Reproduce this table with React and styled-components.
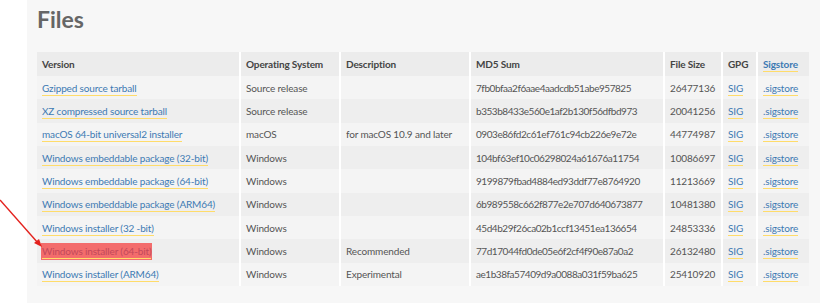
import React from "react";
import styled, { createGlobalStyle } from "styled-components";

const GlobalStyle = createGlobalStyle`
  html, body {
    margin: 0;
    padding: 0;
    background: #ffffff;
  }
  body {
    font-family: Lato, "Open Sans", sans-serif;
  }
`;

const files = [
  ["Gzipped source tarball", "Source release", "", "7fb0bfaa2f6aae4aadcdb51abe957825", "26477136"],
  ["XZ compressed source tarball", "Source release", "", "b353b8433e560e1af2b130f56dfbd973", "20041256"],
  ["macOS 64-bit universal2 installer", "macOS", "for macOS 10.9 and later", "0903e86fd2c61ef761c94cb226e9e72e", "44774987"],
  ["Windows embeddable package (32-bit)", "Windows", "", "104bf63ef10c06298024a61676a11754", "10086697"],
  ["Windows embeddable package (64-bit)", "Windows", "", "9199879fbad4884ed93ddf77e8764920", "11213669"],
  ["Windows embeddable package (ARM64)", "Windows", "", "6b989558c662f877e2e707d640673877", "10481380"],
  ["Windows installer (32 -bit)", "Windows", "", "45d4b29f26ca02b1ccf13451ea136654", "24853336"],
  ["Windows installer (64-bit)", "Windows", "Recommended", "77d17044fd0de05e6f2cf4f90e87a0a2", "26132480", true],
  ["Windows installer (ARM64)", "Windows", "Experimental", "ae1b38fa57409d9a0088a031f59ba625", "25410920"],
];

const widths = [203, 100, 130, 194, 58, 35, 52];

const App = () => {
  return (
    <Page>
      <GlobalStyle />
      <Panel>
        <Title>Files</Title>
        <Table>
          <colgroup>
            {widths.map((w, i) => (
              <col key={i} style={{ width: w }} />
            ))}
          </colgroup>
          <thead>
            <HeadRow>
              <Th>Version</Th>
              <Th>Operating System</Th>
              <Th>Description</Th>
              <Th>MD5 Sum</Th>
              <Th>File Size</Th>
              <Th>GPG</Th>
              <Th>
                <Link $bold>Sigstore</Link>
              </Th>
            </HeadRow>
          </thead>
          <tbody>
            {files.map(([name, os, desc, md5, size, marked]) => (
              <Row key={name}>
                <Td>
                  <Link $marked={marked}>{name}</Link>
                </Td>
                <Td>{os}</Td>
                <Td>{desc}</Td>
                <Td $hash>{md5}</Td>
                <Td>{size}</Td>
                <Td>
                  <Link>SIG</Link>
                </Td>
                <Td>
                  <Link>.sigstore</Link>
                </Td>
              </Row>
            ))}
          </tbody>
        </Table>
      </Panel>
      <Arrow width="46" height="52" viewBox="0 0 46 52">
        <line x1="0" y1="1" x2="38" y2="44" stroke="#e3211d" strokeWidth="1.4" />
        <polygon points="42,48 34,44 39,40" fill="#e3211d" />
      </Arrow>
    </Page>
  );
};

export default App;

const Page = styled.div`
  position: relative;
  width: 820px;
  height: 303px;
  padding-left: 27px;
  box-sizing: border-box;
  overflow: hidden;
`;

const Panel = styled.section`
  background: #f7f7f7;
  height: 100%;
  padding: 0 10px;
`;

const Title = styled.h2`
  margin: 0;
  padding-top: 5px;
  height: 52px;
  box-sizing: border-box;
  font-size: 23px;
  line-height: 28px;
  font-weight: 700;
  color: #666666;
`;

const Table = styled.table`
  table-layout: fixed;
  width: 772px;
  border-collapse: collapse;
  font-size: 10px;
  letter-spacing: -0.15px;
  color: #555555;
`;

const HeadRow = styled.tr`
  background: #ececec;
  height: 24px;
`;

const Row = styled.tr`
  height: 23.35px;
  &:nth-child(odd) {
    background: #f4f4f4;
  }
  &:nth-child(even) {
    background: #eeeeee;
  }
`;

const Th = styled.th`
  text-align: left;
  font-weight: 700;
  color: #444444;
  padding: 0 5px;
  white-space: nowrap;
  & + & {
    border-left: 2px solid #ffffff;
  }
`;

const Td = styled.td`
  padding: 0 5px;
  white-space: nowrap;
  overflow: hidden;
  ${(p) => p.$hash && "letter-spacing: -0.45px;"}
  & + & {
    border-left: 2px solid #ffffff;
  }
`;

const Link = styled.a`
  color: ${(p) => (p.$marked ? "#c2495a" : "#3d7ab3")};
  font-weight: ${(p) => (p.$bold ? 700 : 400)};
  text-decoration: none;
  border-bottom: 1px solid #ffdc6a;
  padding: 1px 0;
  background: ${(p) => (p.$marked ? "#f36c6c" : "transparent")};
  ${(p) => p.$marked && "box-shadow: 0 0 0 1px #f36c6c;"}
`;

const Arrow = styled.svg`
  position: absolute;
  left: 0;
  top: 199px;
`;
